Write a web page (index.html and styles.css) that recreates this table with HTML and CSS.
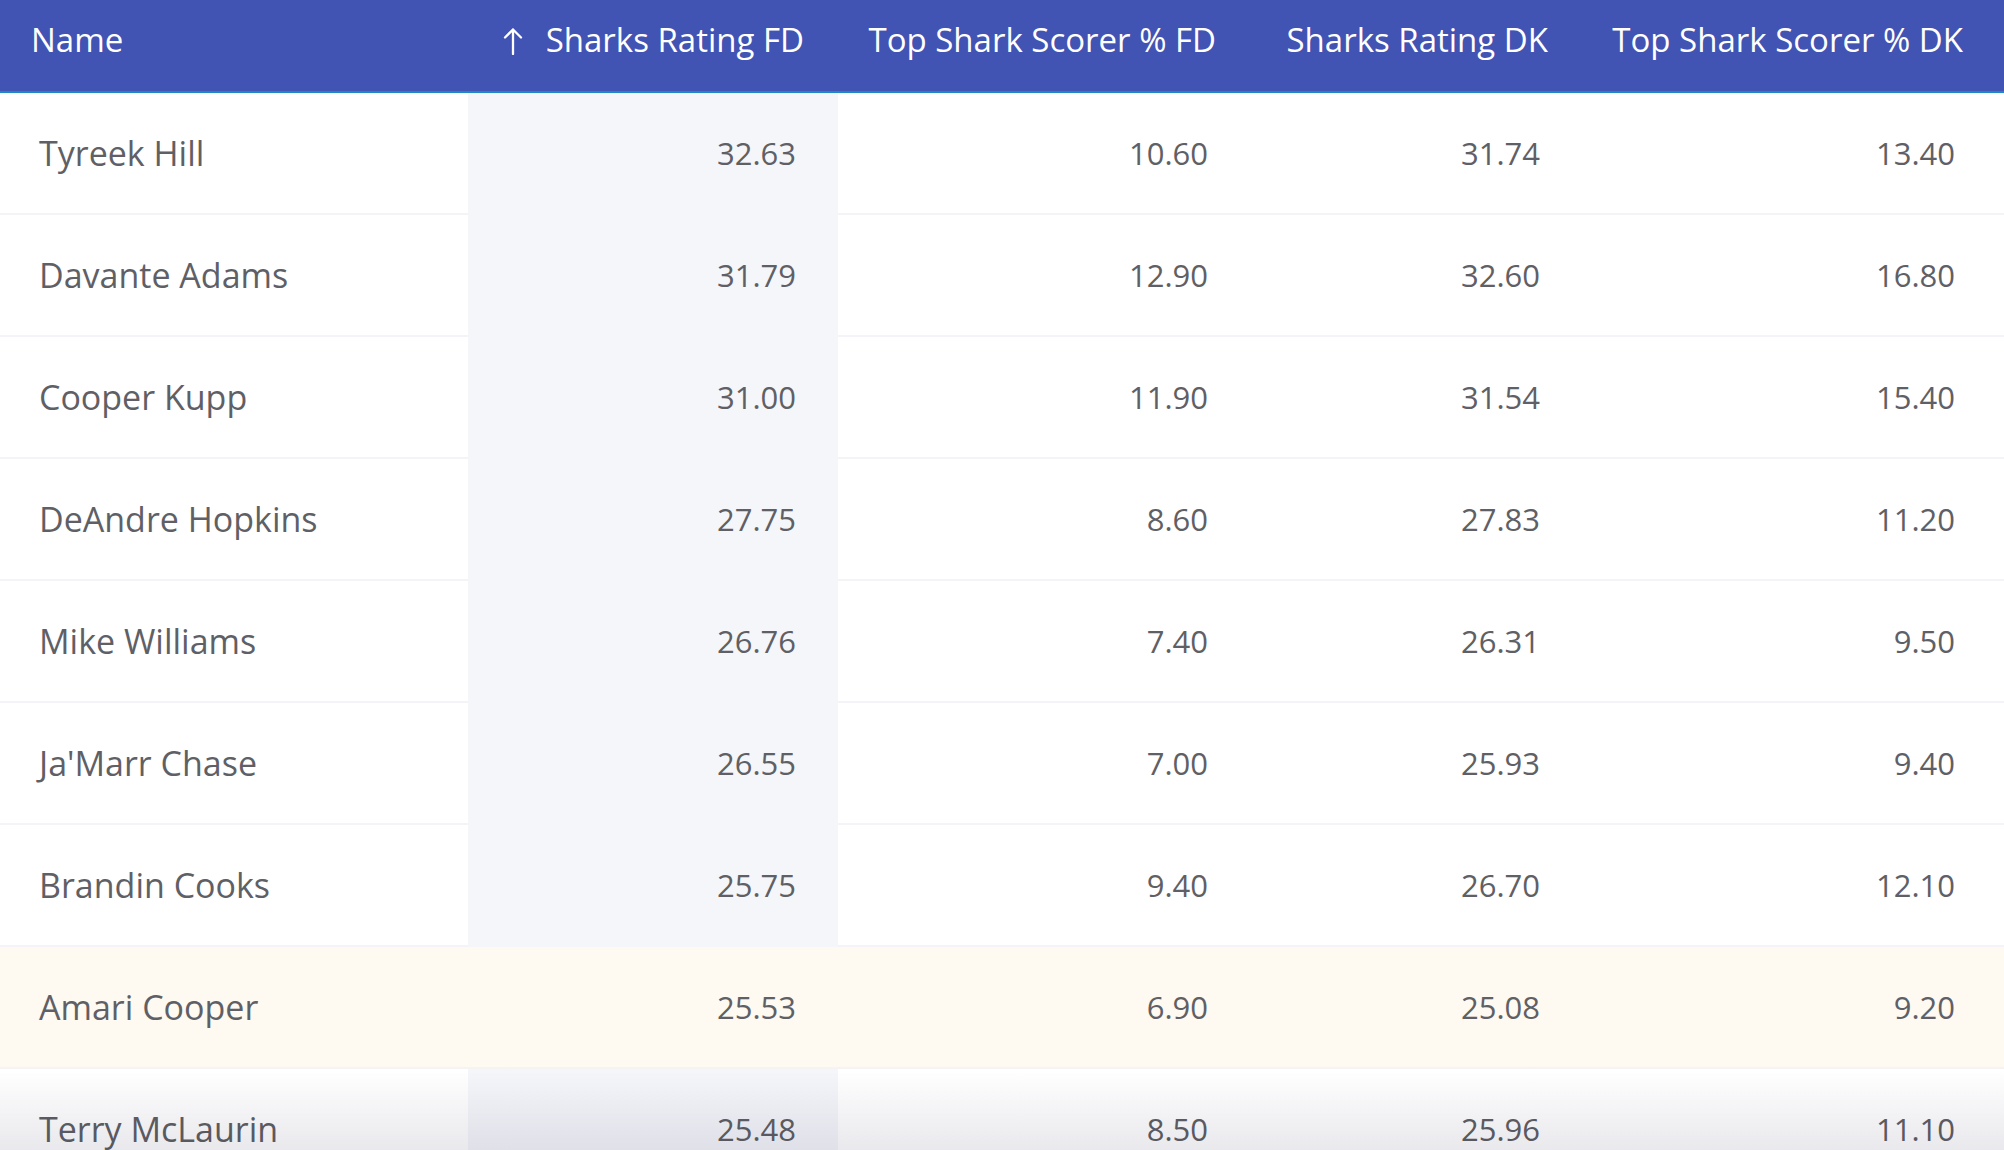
FILE: index.html
```html
<!DOCTYPE html>
<html lang="en">
<head>
    <meta charset="UTF-8">
    <meta name="viewport" content="width=device-width, initial-scale=1.0">
    <title>Sharks Ratings</title>
    <link rel="stylesheet" href="styles.css">
</head>
<body>
    <div class="grid-wrap">
        <table class="sharks">
            <colgroup>
                <col class="c-name">
                <col class="c-fd">
                <col class="c-fdpct">
                <col class="c-dk">
                <col class="c-dkpct">
            </colgroup>
            <thead>
                <tr>
                    <th class="left">Name</th>
                    <th class="sorted-head">
                        <svg class="sort-icon" width="22" height="28" viewBox="0 0 22 28"><path d="M11 2.5V27M3 10.5L11 2.5L19 10.5" fill="none" stroke="#fff" stroke-width="2.3" stroke-linecap="round" stroke-linejoin="round"/></svg>Sharks Rating FD
                    </th>
                    <th>Top Shark Scorer % FD</th>
                    <th>Sharks Rating DK</th>
                    <th class="last">Top Shark Scorer % DK</th>
                </tr>
            </thead>
            <tbody>
                <tr><td class="left">Tyreek Hill</td><td class="sorted">32.63</td><td>10.60</td><td>31.74</td><td class="last">13.40</td></tr>
                <tr><td class="left">Davante Adams</td><td class="sorted">31.79</td><td>12.90</td><td>32.60</td><td class="last">16.80</td></tr>
                <tr><td class="left">Cooper Kupp</td><td class="sorted">31.00</td><td>11.90</td><td>31.54</td><td class="last">15.40</td></tr>
                <tr><td class="left">DeAndre Hopkins</td><td class="sorted">27.75</td><td>8.60</td><td>27.83</td><td class="last">11.20</td></tr>
                <tr><td class="left">Mike Williams</td><td class="sorted">26.76</td><td>7.40</td><td>26.31</td><td class="last">9.50</td></tr>
                <tr><td class="left">Ja'Marr Chase</td><td class="sorted">26.55</td><td>7.00</td><td>25.93</td><td class="last">9.40</td></tr>
                <tr><td class="left">Brandin Cooks</td><td class="sorted">25.75</td><td>9.40</td><td>26.70</td><td class="last">12.10</td></tr>
                <tr class="hover"><td class="left">Amari Cooper</td><td class="sorted">25.53</td><td>6.90</td><td>25.08</td><td class="last">9.20</td></tr>
                <tr><td class="left">Terry McLaurin</td><td class="sorted">25.48</td><td>8.50</td><td>25.96</td><td class="last">11.10</td></tr>
            </tbody>
        </table>
        <div class="fade"></div>
    </div>
</body>
</html>
```

FILE: styles.css
```css
html, body {
    margin: 0;
    height: 100%;
    overflow: hidden;
}
body {
    font-family: "Open Sans", Arial, sans-serif;
    background-color: #fff;
    color: #5f6066;
}
.grid-wrap {
    position: relative;
}
.sharks {
    width: 100%;
    border-collapse: collapse;
    table-layout: fixed;
}
.c-name { width: 468px; }
.c-fd { width: 370px; }
.c-fdpct { width: 412px; }
.c-dk { width: 332px; }
.c-dkpct { width: 422px; }

.sharks th {
    height: 92px;
    padding: 0 34px 12px 0;
    background-color: #4153b3;
    border-bottom: 2px solid #1c88c6;
    color: #fff;
    font-size: 33px;
    font-weight: 400;
    text-align: right;
    white-space: nowrap;
    box-sizing: border-box;
}
.sharks th.left {
    text-align: left;
    padding-left: 31px;
}
.sharks th.last {
    padding-right: 41px;
}
.sort-icon {
    vertical-align: -3px;
    margin-right: 22px;
}
.sharks td {
    height: 120px;
    padding: 0 42px 0 0;
    border-bottom: 2px solid #f3f3f8;
    font-size: 31px;
    text-align: right;
    white-space: nowrap;
}
.sharks td.left {
    text-align: left;
    padding-left: 39px;
    font-size: 34px;
}
.sharks td.last {
    padding-right: 49px;
}
.sharks td.sorted {
    background-color: #f5f6fa;
    border-bottom-color: #f5f6fa;
}
.sharks tr.hover td {
    background-color: #fef9f1;
    border-bottom-color: #f5f4f4;
}
.fade {
    position: fixed;
    left: 0;
    right: 0;
    bottom: 0;
    height: 80px;
    background: linear-gradient(#fff, #e9e9ed);
    mix-blend-mode: multiply;
    pointer-events: none;
}
```
